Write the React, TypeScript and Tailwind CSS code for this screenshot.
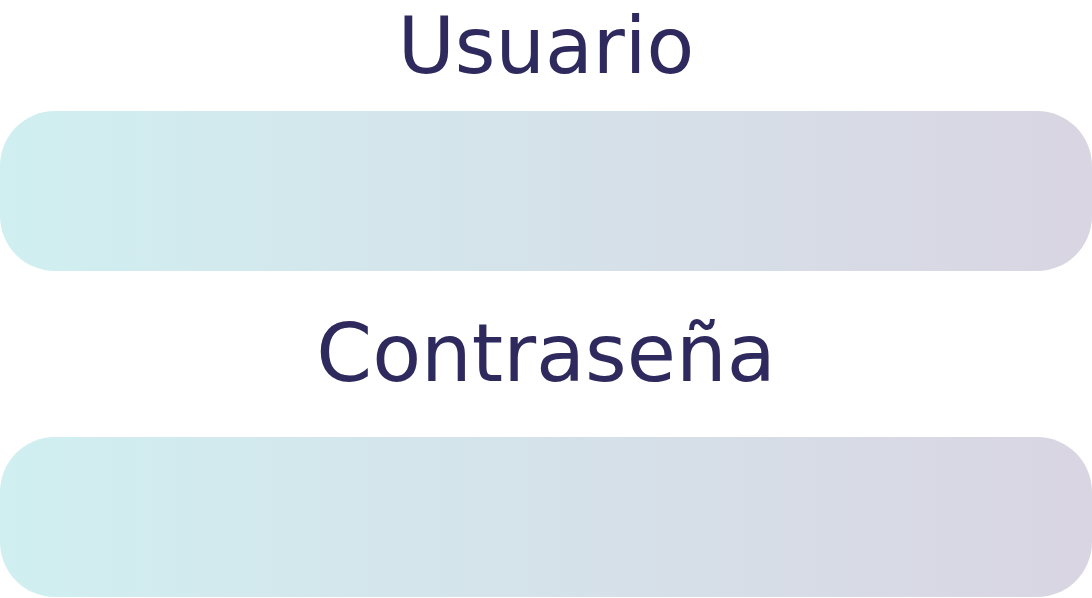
export default function App() {
  return (
    <div className="w-[1092px] h-[598px] bg-white overflow-hidden flex flex-col" style={{ fontFamily: '"DejaVu Sans", "Noto Sans", sans-serif' }}>
      {/* Usuario */}
      <label className="block h-[86px] pt-[3px] text-center text-[78px] leading-[86px] text-[#2e2a5e] mb-[25px]">
        Usuario
      </label>
      <div className="h-[160px] w-full rounded-[55px] bg-gradient-to-r from-[#d0eff1] to-[#d9d5e2]" />

      {/* Contraseña */}
      <label className="block h-[86px] mt-[40px] mb-[40px] text-center text-[80px] leading-[86px] text-[#2e2a5e]">
        Contraseña
      </label>
      <div className="h-[160px] w-full rounded-[55px] bg-gradient-to-r from-[#d0eff1] to-[#d9d5e2]" />
    </div>
  );
}
